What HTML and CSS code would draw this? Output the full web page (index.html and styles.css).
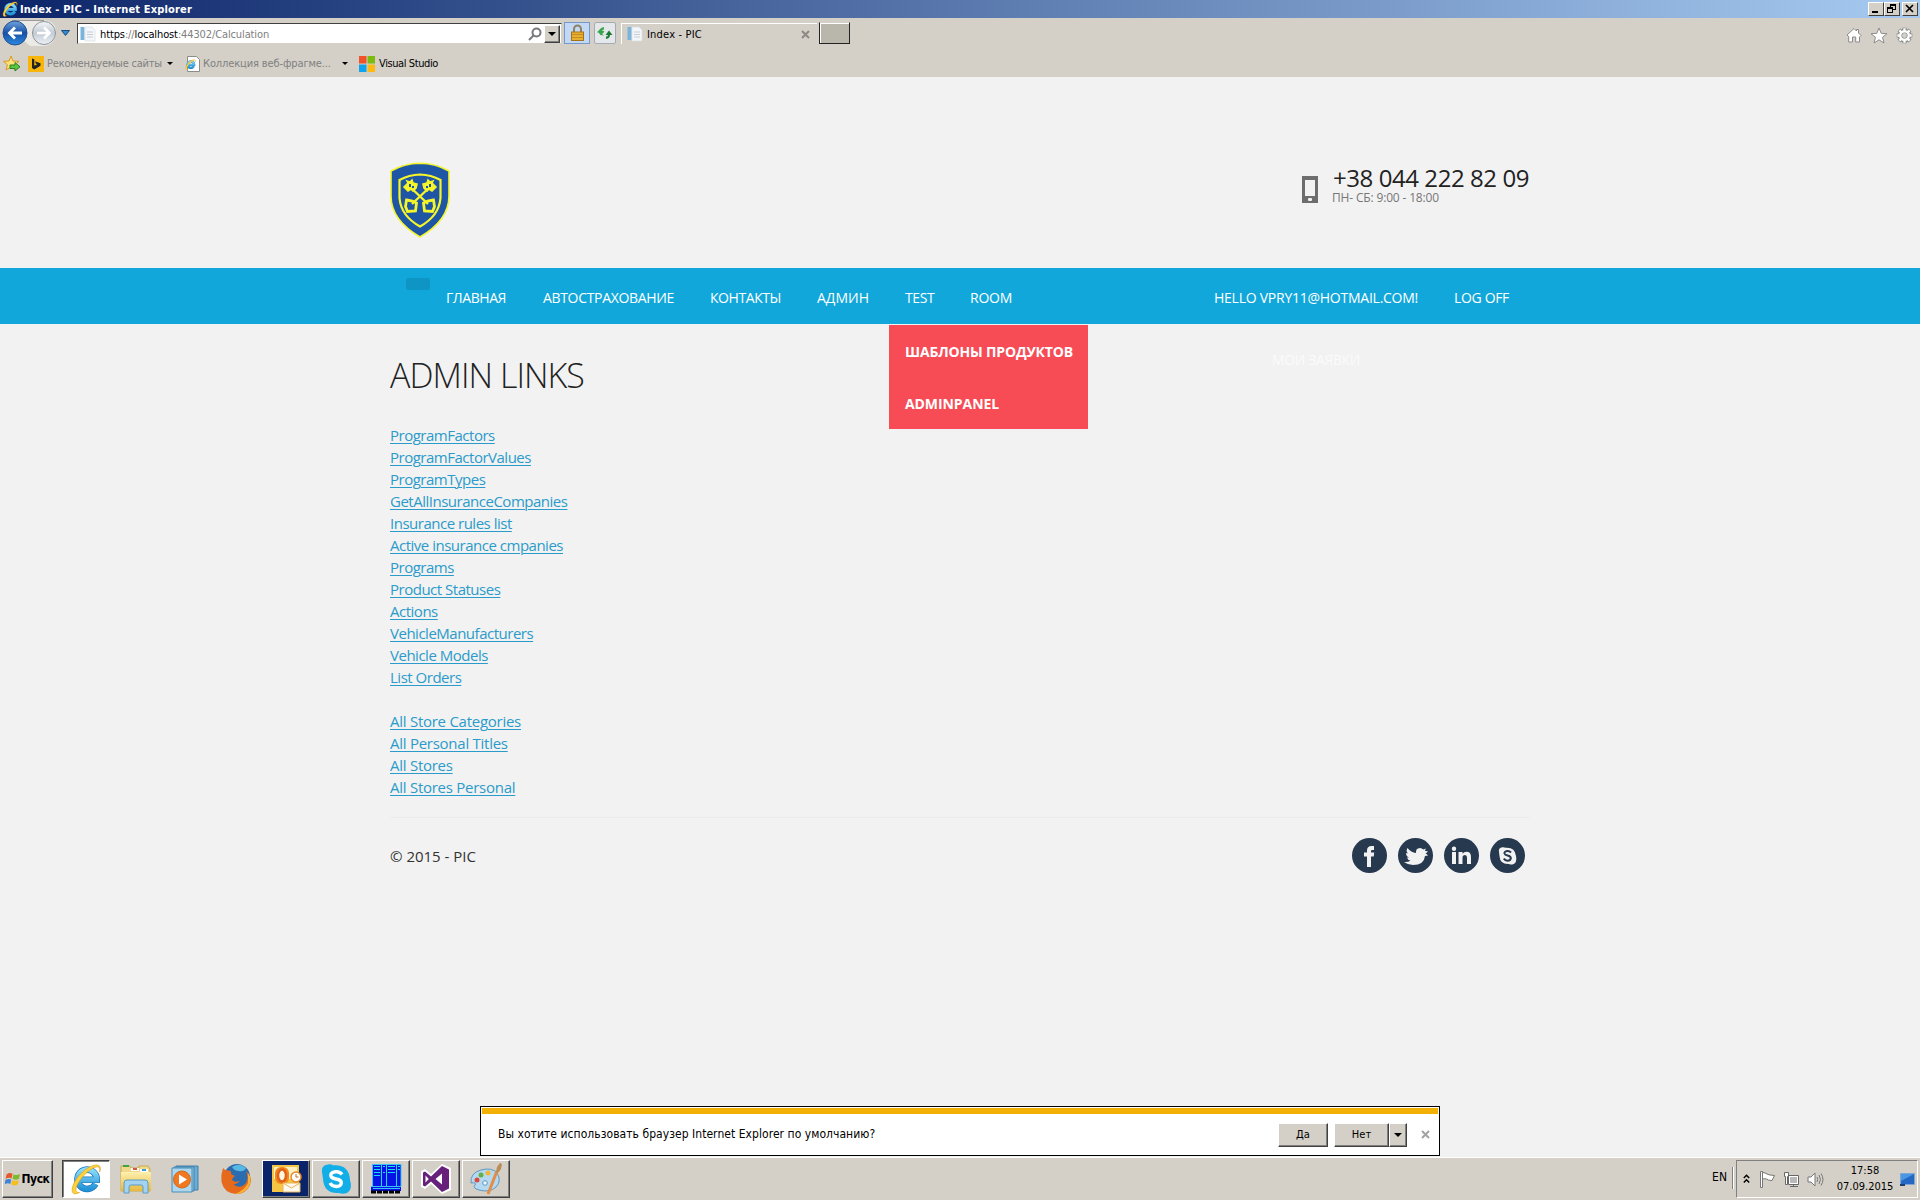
FILE: index.html
```html
<!DOCTYPE html>
<html lang="ru">
<head>
<meta charset="utf-8">
<title>Index - PIC</title>
<link rel="stylesheet" href="styles.css">
</head>
<body>
<svg class="defs" width="0" height="0">
  <defs>
    <linearGradient id="gBlue" x1="0" y1="0" x2="0" y2="1"><stop offset="0" stop-color="#6fa3dc"/><stop offset=".5" stop-color="#1750a8"/><stop offset="1" stop-color="#2c8ae0"/></linearGradient>
    <linearGradient id="gGrey" x1="0" y1="0" x2="0" y2="1"><stop offset="0" stop-color="#f5f7fa"/><stop offset=".5" stop-color="#c3cad3"/><stop offset="1" stop-color="#eef2f6"/></linearGradient>
    <linearGradient id="gIe" x1="0" y1="0" x2="0" y2="1"><stop offset="0" stop-color="#8bdcf8"/><stop offset="1" stop-color="#2394d8"/></linearGradient>
    <linearGradient id="gGold" x1="0" y1="0" x2="0" y2="1"><stop offset="0" stop-color="#fff0b0"/><stop offset="1" stop-color="#e6b93c"/></linearGradient>
    <symbol id="ie" viewBox="0 0 32 32">
      <path d="M25.500 21A9.600 9.600 0 1 1 26.700 16.800H9.500" fill="none" stroke="#1c74b8" stroke-width="6.600"/>
      <path d="M25.500 21A9.600 9.600 0 1 1 26.700 16.800H9.500" fill="none" stroke="url(#gIe)" stroke-width="5.200"/>
      <path d="M29.500 9C32 3.500 29 .5 23 2.500C13 6 4 17 2.300 25C1.300 31 4.500 32 9.500 29.500C5.500 29.800 5 27 7 22.500C10.500 15 18 7 25 4.300C29 2.800 30.500 5 29.500 9Z" fill="#ffd23c" stroke="#d99a12" stroke-width=".6"/>
    </symbol>
    <symbol id="page" viewBox="0 0 16 16">
      <rect x=".5" y="1" width="4" height="13" fill="#79b4dc"/><path d="M5 1h7l3 3v11H5z" fill="#f4f7f9" stroke="#d5dde3" stroke-width=".7"/><path d="M7 6h6M7 8.500h6M7 11h6" stroke="#c5ccd4" stroke-width="1"/>
    </symbol>
    <symbol id="winflag" viewBox="0 0 16 16">
      <path d="M1.500 3.500Q4.500 1 7.500 2.800L6.500 7.500Q3.500 6 .6 8z" fill="#e8572a"/><path d="M8.500 3.200Q11.500 5 15 3L14 7.800Q11 9.500 7.500 7.800z" fill="#7fba2c"/><path d="M.4 9Q3.500 7 6.300 8.600L5.300 13Q2.500 11.500-.5 13.500z" fill="#3b84d8"/><path d="M7.300 9Q10.500 10.800 13.800 9L12.800 13.500Q9.500 15.200 6.300 13.500z" fill="#f7bd1d"/>
    </symbol>
  </defs>
</svg>

<header class="titlebar">
  <svg width="16" height="16"><use href="#ie"/></svg>
  <span class="titlebar-text">Index - PIC - Internet Explorer</span>
  <div class="winbtns">
    <span class="winbtn"><svg width="15" height="13"><path d="M4 10h6" stroke="#000" stroke-width="2"/></svg></span>
    <span class="winbtn"><svg width="15" height="13" fill="none" stroke="#000"><path d="M6 2.500h6M6 3.500h6M6.500 2v3M11.500 2v6M9 7.500h3M3 5.500h6M3 6.500h6M3.500 5v6M8.500 5v6M3 10.500h6"/></svg></span>
    <span class="winbtn gap"><svg width="15" height="13"><path d="M4 3l7 7M11 3l-7 7" stroke="#000" stroke-width="1.700"/></svg></span>
  </div>
</header>

<div class="navrow">
  <svg class="backfwd" width="72" height="28" viewBox="0 0 72 28">
    <path d="M15 1H44Q57 3 56 14Q55 26 44 27H30Q20 20 15 1Z" fill="#eceae5"/><path d="M12 1.500H44" stroke="#9b9b9b"/>
    <circle cx="15" cy="14" r="12" fill="url(#gBlue)" stroke="#27508c"/><path d="M22 14H10M15 8.500L9.500 14L15 19.500" fill="none" stroke="#fff" stroke-width="2.800"/>
    <circle cx="44" cy="14" r="11.500" fill="url(#gGrey)" stroke="#8d949c"/><path d="M37 14h12M44 8.500l5.500 5.500l-5.500 5.500" fill="none" stroke="#fff" stroke-width="2.600"/>
    <path d="M61.500 11.500h8l-4 5z" fill="#2f8ad0" stroke="#164c80"/>
  </svg>
  <div class="address">
    <svg width="16" height="16"><use href="#page"/></svg>
    <span class="url"><b>https</b>://<b>localhost</b>:44302/Calculation</span>
    <svg class="mag" width="14" height="14" fill="none" stroke="#77777d" stroke-width="2"><circle cx="8.500" cy="5.500" r="4"/><path d="M5.500 8.500L1 13"/></svg>
    <span class="drop"><i class="caret"></i></span>
  </div>
  <span class="lockbox"><svg width="15" height="18"><path d="M4 8V5a3.500 3.500 0 0 1 7 0v3" fill="none" stroke="#8d8363" stroke-width="2"/><rect x="1.500" y="8" width="12" height="8.500" fill="#e9b030" stroke="#a3731a"/><path d="M2 10.500h11M2 13.500h11" stroke="#c48c20"/></svg></span>
  <span class="refresh"><svg width="16" height="14"><path d="M0 5.500L3.500 1.500L7 5.500H4.800Q5 7.500 7 8.500Q2.500 8.500 2.300 5.500z" transform="translate(0 1)" fill="#3aa74b"/><path d="M3 5Q3 1.500 7 1V3.500Q5 3.500 5 5H7.500L4 9.500L.5 5z" fill="#3aa74b"/><path d="M13 9Q13 12.500 9 13V10.500Q11 10.500 11 9H8.500L12 4.500L15.500 9z" fill="#1d7c30"/></svg></span>
  <div class="tab">
    <svg width="16" height="16"><use href="#page"/></svg>
    <span class="tabtitle">Index - PIC</span>
    <svg class="tabclose" width="9" height="9"><path d="M1 1l7 7M8 1l-7 7" stroke="#8c8984" stroke-width="2"/></svg>
  </div>
  <span class="newtab"></span>
  <div class="tools">
    <svg width="16" height="16" fill="#fff" stroke="#8b8b8b"><path d="M1 8L8 1.500L10.500 4V2.500h2V6L15 8.500L13.500 10V15H9.700V10H6.500v5H2.700V9.500z"/></svg>
    <svg width="18" height="17" fill="#fff" stroke="#8b8b8b"><path d="M9 1l2.200 5.300l5.800.4l-4.500 3.600l1.500 5.700l-5-3.200l-5 3.200l1.500-5.700L1 6.700l5.800-.4z"/></svg>
    <svg width="17" height="17" viewBox="-8.500 -8.500 17 17" fill="none"><g stroke="#858585" stroke-width="4.200"><path d="M0-7.800V-5M0 7.800V5M-7.800 0H-5M7.800 0H5M-5.500-5.500l2 2M5.500 5.500l-2-2M-5.500 5.500l2-2M5.500-5.500l-2 2"/></g><circle r="4.500" stroke="#858585" stroke-width="4.200"/><g stroke="#fff" stroke-width="2.400"><circle r="4.300"/><path d="M0-7.200V-5M0 7.200V5M-7.200 0H-5M7.200 0H5M-5.100-5.100l2 2M5.100 5.100l-2-2M-5.100 5.100l2-2M5.100-5.100l-2 2"/></g></svg>
  </div>
</div>

<div class="favbar">
  <svg class="fav-add" width="18" height="17"><path d="M8 1l2 5l6 .3l-4.300 3.500l1.300 5.200l-5-3l-5 3l1.500-5.200L.5 6.300L6 6z" fill="#ffe27a" stroke="#d8991f"/><path d="M7 10h5V7.500l5 4.300l-5 4.200v-2.500H7z" fill="#5cc540" stroke="#2b8420"/></svg>
  <svg class="bing" width="16" height="16"><path d="M0 0h16v16H0z" fill="#f8b50c"/><path d="M4 2.500l2.300.8v6.500l3-1.600l-1.500-.8L7 5.200l5.500 2v2.600L6.300 13.500L4 12z" fill="#222"/></svg>
  <span class="fav-rec">Рекомендуемые сайты</span><i class="caret sm"></i>
  <svg class="snip" width="16" height="16"><path d="M2.500.5h9l3 3v12h-12z" fill="#fff" stroke="#8c8c8c"/><svg x="0" y="3" width="11" height="11"><use href="#ie"/></svg></svg>
  <span class="fav-col">Коллекция веб-фрагме...</span><i class="caret sm far"></i>
  <svg class="ms" width="16" height="16"><path d="M0 0h7.500v7.500H0z" fill="#f0522a"/><path d="M8.500 0H16v7.500H8.500z" fill="#7cbb10"/><path d="M0 8.500h7.500V16H0z" fill="#10a3ee"/><path d="M8.500 8.500H16V16H8.500z" fill="#fdb914"/></svg>
  <span class="fav-vs">Visual Studio</span>
</div>

<main class="page">
  <section class="container top">
    <svg class="logo" width="60" height="76" viewBox="0 0 60 76">
      <path d="M30 1.200Q46 1.500 59 9V34Q59 58 30 75Q1 58 1 34V9Q14 1.500 30 1.200Z" fill="#1e56a5" stroke="#f5f52a" stroke-width="1.600"/>
      <path d="M30 12.500Q41 12.800 50.500 18V36Q49 54 30 64.500Q11 54 9.500 36V18Q19 12.800 30 12.500Z" fill="none" stroke="#f5f52a" stroke-width="2.200"/>
      <g fill="none" stroke="#f5f52a"><path d="M17 22L38 42M43 22L22 42" stroke-width="2.400"/><path d="M14 25l4-4l-1-2l3 1l2-2l1 3l4 1l-1 4l-3 3l-2-2l-3 2zM46 25l-4-4l1-2l-3 1l-2-2l-1 3l-4 1l1 4l3 3l2-2l3 2z" stroke-width="1.600" fill="#f5f52a"/><path d="M16.500 38l6 1l4 2l-1 8l-8 .5l-2-5zM43.500 38l-6 1l-4 2l1 8l8 .5l2-5z" stroke-width="2.800"/></g>
      <g fill="#1e56a5"><path d="M19 22h2v3h-2zM22 24h2v2h-2zM39 22h2v3h-2zM36 24h2v2h-2z"/></g>
    </svg>
    <div class="phone">
      <svg width="16" height="27"><path d="M0 0h16v27H0zM3 4v16h10V4z" fill="#6d6d6d" fill-rule="evenodd"/><rect x="6" y="22" width="4" height="3" rx="1" fill="#f2f2f2"/></svg>
      <div><div class="number">+38 044 222 82 09</div><div class="hours">ПН- СБ: 9:00 - 18:00</div></div>
    </div>
  </section>

  <nav class="menu">
    <div class="container menu-in">
      <span class="toggle"></span>
      <a class="home">ГЛАВНАЯ</a>
      <a class="auto">АВТОСТРАХОВАНИЕ</a>
      <a class="cont">КОНТАКТЫ</a>
      <a class="adm">АДМИН</a>
      <div class="has-sub">
        <a class="test">TEST</a>
        <div class="sub"><a class="tpl">ШАБЛОНЫ ПРОДУКТОВ</a><a>ADMINPANEL</a></div>
      </div>
      <a class="room">ROOM</a>
      <div class="has-sub user"><a class="hello">HELLO VPRY11@HOTMAIL.COM!</a><a class="orders">МОИ ЗАЯВКИ</a></div>
      <a class="logoff">LOG OFF</a>
    </div>
  </nav>

  <section class="container content">
    <h1>ADMIN LINKS</h1>
    <div class="links">
      <a>ProgramFactors</a><a>ProgramFactorValues</a><a>ProgramTypes</a><a>GetAllInsuranceCompanies</a><a>Insurance rules list</a><a>Active insurance cmpanies</a><a>Programs</a><a>Product Statuses</a><a>Actions</a><a>VehicleManufacturers</a><a>Vehicle Models</a><a>List Orders</a>
    </div>
    <div class="links stores">
      <a>All Store Categories</a><a>All Personal Titles</a><a>All Stores</a><a>All Stores Personal</a>
    </div>
    <footer>
      <span>© 2015 - PIC</span>
      <div class="social">
        <svg width="35" height="35"><circle cx="17.500" cy="17.500" r="17.500" fill="#27394f"/><path d="M15 29V18.500H12V14.500h3V12.500Q15 8 19.500 8H22v4h-2Q19 12 19 13.200V14.500h3.200l-.5 4H19V29z" fill="#f2f2f2"/></svg>
        <svg width="35" height="35"><circle cx="17.500" cy="17.500" r="17.500" fill="#27394f"/><path d="M6 24Q10 24.500 12.500 22.500Q9.500 22 9 19.500H11Q8 18 8 15l2 .6Q7.500 13 9.500 10Q13 14.500 18 15Q17.500 10.200 22 10Q24 10 25.200 11.500L28 10.500L26.800 12.800L30 13.500L27.500 15.800Q29 16 30 17.500L27 18Q26 27 15 27Q10 27 6 24Z" fill="#f2f2f2"/></svg>
        <svg width="35" height="35"><circle cx="17.500" cy="17.500" r="17.500" fill="#27394f"/><path d="M8 14h4v12H8zM14.500 14h4v1.800Q20 13.700 22.500 13.700Q27 13.700 27 19v7h-4v-6.500Q23 17 21 17Q18.500 17 18.500 19.800V26h-4z" fill="#f2f2f2"/><circle cx="10" cy="10.800" r="2.200" fill="#f2f2f2"/></svg>
        <svg width="35" height="35"><circle cx="17.500" cy="17.500" r="17.500" fill="#27394f"/><path d="M9 14Q8 10 12.500 9.200Q14.500 9 15.500 9.800Q25 9 26 18Q27.500 25 22.500 26.500Q20.500 26.800 19 26Q10 26.500 9.500 18Z" fill="#f2f2f2"/><path d="M21 14.500Q19.500 12.800 17.200 13Q14 13.500 14.500 15.500Q15 17 17.500 17.500Q21 18.200 20.800 20.500Q20.200 22.800 17.500 22.700Q15 22.500 13.800 20.500" fill="none" stroke="#27394f" stroke-width="2"/></svg>
      </div>
    </footer>
  </section>

  <aside class="notice">
    <span class="question">Вы хотите использовать браузер Internet Explorer по умолчанию?</span>
    <button class="btn yes">Да</button>
    <button class="btn no">Нет</button><button class="btn arrow"><i class="caret"></i></button>
    <svg class="dismiss" width="9" height="9"><path d="M1 1l7 7M8 1l-7 7" stroke="#a3a3a3" stroke-width="2"/></svg>
  </aside>
</main>

<div class="taskbar">
  <div class="start"><svg width="16" height="16"><use href="#winflag"/></svg>Пуск</div>
  <div class="task active"><svg width="32" height="32"><use href="#ie"/></svg></div>
  <div class="task flat"><svg width="32" height="32"><path d="M1 3h9l1 2h8v-2h9l2 3v22H1z" fill="#f0d98a" stroke="#caa84c"/><path d="M3 2h6v2H3z" fill="#3ba54a"/><path d="M11 5h8v3h-8z" fill="#fff"/><path d="M13 5h4v2h-4z" fill="#d45b3a"/><path d="M20 6h8v3h-8z" fill="#fff"/><path d="M22 6h4v2h-4z" fill="#3f9ad0"/><path d="M1 9h30v19H1z" fill="url(#gGold)"/><path d="M4 30V20q0-3 3-3h18q3 0 3 3v10h-5v-6q0-2-2-2H11q-2 0-2 2v6z" fill="#a3d3ee" stroke="#5b9cc6"/></svg></div>
  <div class="task flat"><svg width="32" height="32"><path d="M6 3h22v24H6z" fill="#6aaed4" stroke="#3e7ea8"/><path d="M4 4h20v24H4z" fill="#8ec5e3" stroke="#3e7ea8"/><path d="M2 5h20v24H2z" fill="#acd7ee" stroke="#4b8db6"/><circle cx="12" cy="16.500" r="8.500" fill="#f07820" stroke="#d2691d"/><path d="M9 11.500l8 5l-8 5z" fill="#fff"/></svg></div>
  <div class="task flat"><svg width="32" height="32"><circle cx="17" cy="14" r="13" fill="#2a6cae"/><path d="M12 4Q20-1 26 5Q24 9 19 8Q14 8 12 4z" fill="#58b8e4"/><path d="M3 5Q5 8 9 7.500Q12 8 11 11L15 13Q12 15 12 17Q15 20 20 18Q17 22 13 21Q20 27 26 20Q29 15 26 8Q33 14 30 22Q26 31 16 31Q4 30 1.500 19Q.5 12 3 5z" fill="#e66a1c"/><path d="M28 10Q33 17 28 25Q23 31 15 31Q25 27 28 20z" fill="#f9b233"/></svg></div>
  <div class="task navy"><svg width="34" height="34"><path d="M3 3h27v27H3z" fill="#f7c544"/><path d="M5 5h23v12H5z" fill="#fff1c2"/><rect x="6" y="5" width="14" height="17" rx="6" fill="#f08a1d"/><ellipse cx="13" cy="13.500" rx="4" ry="6" fill="#fff6df" stroke="#e2601a" stroke-width="2.500"/><path d="M14 21h17v9H14z" fill="#fffaf0" stroke="#e9b45b"/><path d="M14 21l8.500 5l8.500-5" fill="none" stroke="#e9b45b"/><circle cx="27" cy="15" r="5" fill="#fff" stroke="#e78826" stroke-width="1.500"/><path d="M27 12v3h2.500" fill="none" stroke="#c46d1d"/></svg></div>
  <div class="task"><svg width="32" height="32"><path d="M2 9Q1 2 8 1.500Q11 1 13 2.300Q29 1 30 17Q33 26 27 30Q23 31.500 19 30Q4 31 3 16Z" fill="#12aee8"/><path d="M22 11.500Q20 8.500 16 8.700Q10.500 9 10.800 12.500Q11 15 16 16Q21.500 17 21.300 20Q21 23.500 16.500 23.500Q12 23.500 10 20" fill="none" stroke="#fff" stroke-width="3.400"/></svg></div>
  <div class="task"><svg width="32" height="32"><path d="M2 1h29v22H2zM1 23h30v5H1z" fill="#0713e6"/><path d="M11.500 1v22M16.500 1v22M26.500 1v22" stroke="#16dff0"/><path d="M4 3.500h6M4 6.500h6M4 9.500h6M4 12.500h6M13 3.500h2M18 3.500h7M18 6.500h7M18 9.500h7M13 9.500h2M28 3.500h2M28 6.500h2" stroke="#16dff0"/><path d="M2 1.500h29M2.500 1v22M31 1v22M1 23.500h30M3 25.500h27" stroke="#34c5f0"/><path d="M1 29h30" stroke="#000" stroke-width="3" stroke-dasharray="5 1"/></svg></div>
  <div class="task"><svg width="32" height="32"><path d="M22 1l9 4v22l-9 4l-11-10l-6 5l-4-2V8l4-2l6 5z" fill="#fff"/><path d="M22 3l7 3.500v19L22 29L11 18.500L5 23.500l-2-1v-13l2-1l6 5zM22 10.500L15.500 16L22 21.500zM5.500 12.500v7L8.800 16z" fill="#68217a" fill-rule="evenodd"/></svg></div>
  <div class="task"><svg width="32" height="32"><path d="M1 20Q0 10 11 7Q22 4 27 10Q32 18 26 24Q20 30 9 27Q2 25 5 22Q7 19 1 20z" fill="#b5d9f0" stroke="#5e98c0"/><circle cx="7" cy="17" r="2.500" fill="#d84b3a"/><circle cx="11" cy="12" r="2.500" fill="#62b146"/><circle cx="18" cy="10" r="2.500" fill="#f2b63a"/><circle cx="15" cy="20" r="2.300" fill="#edf6fb" stroke="#5e98c0"/><path d="M27 8L18 31" stroke="#e58d46" stroke-width="3"/><path d="M26 9l1-5l3-4l2 1l-1 5l-3 4z" fill="#b98c58"/></svg></div>
  <span class="lang">EN</span><i class="sep"></i>
  <div class="tray">
    <svg class="chev" width="7" height="10" fill="none" stroke="#000" stroke-width="1.500"><path d="M.8 4L3.500 1.300L6.200 4M.8 8.500L3.500 5.800L6.200 8.500"/></svg>
    <svg class="flag" width="17" height="17" fill="#fff" stroke="#777"><path d="M3.500 1.500Q6 1.500 8 3Q9 4 15.500 4.500L13 9.500Q9 9.500 7.500 8Q6 7.500 3.500 8"/><path d="M1.500.5h2v16h-2z"/></svg>
    <svg class="net" width="17" height="17" fill="#fff" stroke="#666"><path d="M5.500 4.500h10v9h-10z"/><path d="M7 6h7v6H7z" fill="#b9b9b9" stroke="none"/><path d="M7 15.500h8M10.500 13.500v2"/><path d="M1.500 1.500h4v4h-1v8h-2v-8h-1z"/></svg>
    <svg class="vol" width="17" height="17" fill="#fff" stroke="#777"><path d="M1 6h3l4-4v13l-4-4H1z"/><path d="M10 6q1.500 2.500 0 5M12 4q3 4.500 0 9M14 2.500q4 6 0 12" fill="none"/></svg>
    <div class="clock"><span>17:58</span><span>07.09.2015</span></div>
    <svg class="desk" width="15" height="13"><path d="M.5.5h14v11H.5z" fill="#2468c4" stroke="#7fa5d3"/><path d="M1 1h13L1 8z" fill="#4b97e6"/><path d="M0 11h5v2H0z" fill="#1b3f74"/></svg>
  </div>
</div>
</body>
</html>
```
FILE: styles.css
```css
* { box-sizing: border-box; }
html, body { height: 100%; }
body {
  margin: 0;
  display: flex;
  flex-direction: column;
  overflow: hidden;
  background: #f2f2f2;
  color: #000;
  font: 11px "DejaVu Sans Condensed", "DejaVu Sans", sans-serif;
  font-stretch: condensed;
  white-space: nowrap;
}
svg { display: block; flex: none; overflow: visible; }
svg.defs { position: absolute; }

/* browser window */
.titlebar {
  flex: none;
  height: 18px;
  display: flex;
  align-items: center;
  padding: 0 2px 0 2px;
  background: linear-gradient(90deg, #0c2569, #a6caf0);
  color: #fff;
}
.titlebar-text { margin-left: 2px; font-weight: bold; letter-spacing: .16px; }
.winbtns { margin-left: auto; display: flex; }
.winbtn {
  width: 16px;
  height: 14px;
  background: #d4d0c8;
  border: 1px solid;
  border-color: #fff #404040 #404040 #fff;
}
.winbtn svg { margin: -1px 0 0 -1px; }
.winbtn.gap { margin-left: 2px; }

.navrow {
  flex: none;
  height: 30px;
  display: flex;
  align-items: center;
  background: #d4d0c8;
}
.backfwd { margin-left: 0; }
.address {
  width: 485px;
  height: 21px;
  margin: 0 0 0 5px;
  display: flex;
  align-items: center;
  padding: 1px 1px 0 2px;
  background: #fff;
  border: 1px solid;
  border-color: #404040 #d4d0c8 #d4d0c8 #404040;
}
.url { margin: 1px 0 0 4px; color: #808080; letter-spacing: -.12px; }
.url b { font-weight: normal; color: #000; }
.mag { margin-left: auto; margin-right: 2px; }
.drop, .btn {
  background: #d4d0c8;
  border: 1px solid;
  border-color: #fff #404040 #404040 #fff;
  box-shadow: inset -1px -1px #808080;
}
.drop { width: 16px; height: 18px; display: flex; align-items: center; justify-content: center; }
.caret {
  width: 0;
  height: 0;
  border: 4px solid transparent;
  border-top-color: #000;
  border-bottom: 0;
}
.caret.sm { border-width: 3px; border-bottom: 0; margin-left: 5px; }
.caret.sm.far { margin-left: 11px; }
.lockbox, .refresh { display: flex; align-items: center; justify-content: center; height: 22px; border: 1px solid; }
.lockbox { width: 26px; margin-left: 2px; background: #c2d8f5; border-color: #7598c8; }
.refresh { width: 22px; margin-left: 4px; background: #e5e8ea; border-color: #a5abb5; border-radius: 2px; }
.tab {
  width: 196px;
  height: 21px;
  margin-left: 5px;
  padding: 1px 7px 0 5px;
  display: flex;
  align-items: center;
  border: solid #fff;
  border-width: 1px 0 0 1px;
}
.tabtitle { margin-left: 4px; letter-spacing: .19px; }
.tabclose { margin-left: auto; }
.newtab {
  width: 31px;
  height: 22px;
  margin-left: 2px;
  background: #b9b6ab;
  border: 1px solid #222;
  border-top-color: #d4d0c8;
  box-shadow: inset 1px 1px #fff;
}
.tools { margin: 4px 7px 0 auto; display: flex; gap: 8px; align-items: center; }

.favbar {
  flex: none;
  height: 29px;
  display: flex;
  align-items: center;
  padding: 2px 0 0 3px;
  background: #d4d0c8;
}
.bing { margin-left: 7px; }
.fav-rec { width: 115px; margin-left: 3px; color: #808080; letter-spacing: -.21px; }
.snip { margin-left: 12px; }
.fav-col { width: 128px; margin-left: 2px; color: #808080; letter-spacing: -.12px; }
.ms { margin-left: 11px; }
.fav-vs { margin-left: 4px; letter-spacing: -.4px; }

/* site */
.page {
  flex: 1;
  display: flex;
  flex-direction: column;
  position: relative;
  background: #f2f2f2;
  font-family: "Open Sans", "Noto Sans", sans-serif;
  font-stretch: normal;
}
.container { width: 1140px; margin: 0 auto; }
.top {
  height: 191px;
  display: flex;
  justify-content: space-between;
  align-items: flex-start;
  padding-top: 85px;
}
.phone { display: flex; gap: 14px; margin-top: 2px; }
.phone svg { margin-top: 12px; }
.number { width: 198px; font-size: 24px; line-height: 28px; letter-spacing: -.43px; color: #222; padding-left: 1px; }
.hours { font-size: 12px; line-height: 12px; letter-spacing: -.16px; color: #777; }

.menu { height: 56px; background: #12a7da; color: #fff; font-size: 14px; line-height: 20px; }
.menu-in { height: 56px; display: flex; align-items: center; padding-top: 4px; }
.toggle {
  align-self: flex-start;
  width: 24px;
  height: 12px;
  margin: 6px 0 0 16px;
  border-radius: 3px;
  background: #0e95c3;
}
.home { width: 60px; margin-left: 16px; letter-spacing: -.44px; }
.auto { width: 131px; margin-left: 37px; letter-spacing: -.33px; }
.cont { width: 71px; margin-left: 36px; letter-spacing: -.43px; }
.adm { width: 52px; margin-left: 36px; }
.has-sub { position: relative; margin-left: 36px; }
.test { letter-spacing: -.4px; }
.has-sub:not(.user) { width: 29px; }
.room { width: 42px; margin-left: 36px; letter-spacing: -.25px; }
.user { width: 204px; margin-left: auto; }
.hello { letter-spacing: -.25px; }
.logoff { width: 55px; margin: 0 21px 0 36px; letter-spacing: -.34px; }
.sub {
  position: absolute;
  left: -16px;
  top: 37px;
  width: 199px;
  height: 104px;
  padding: 1px 0 0 16px;
  background: #f74b55;
  font-weight: bold;
  line-height: 52px;
}
.sub a { display: block; letter-spacing: -.08px; }
.sub .tpl { letter-spacing: -.16px; }
.orders { position: absolute; left: 58px; top: 62px; letter-spacing: -.38px; color: #fbfbfb; }

h1 {
  margin: 0;
  padding-top: 31px;
  height: 100px;
  font-size: 34px;
  line-height: 40px;
  font-weight: 300;
  letter-spacing: -.96px;
  color: #222;
}
.links { display: flex; flex-direction: column; align-items: flex-start; font-size: 15px; line-height: 22px; letter-spacing: -.49px; }
.links a { color: #2a9bcb; text-decoration: underline 1px; text-underline-offset: 2px; }
.stores { margin-top: 22px; letter-spacing: -.26px; }
footer {
  display: flex;
  align-items: center;
  justify-content: space-between;
  height: 76px;
  margin-top: 19px;
  padding-right: 5px;
  border-top: 1px solid #ececec;
  font-size: 15px;
  color: #333;
}
.social { display: flex; gap: 11px; }

.notice {
  position: absolute;
  left: 480px;
  bottom: 1px;
  width: 960px;
  height: 50px;
  display: flex;
  align-items: center;
  padding: 7px 9px 0 17px;
  background: #fff;
  border: 1px solid #000;
  font: 12px "DejaVu Sans Condensed", "DejaVu Sans", sans-serif;
  font-stretch: condensed;
}
.notice::before { content: ""; position: absolute; left: 1px; right: 1px; top: 1px; height: 6px; background: #f2b005; }
.question { letter-spacing: .05px; margin-top: -1px; }
.btn { height: 24px; padding: 0; font: inherit; font-size: 11px; color: #000; }
.yes { width: 50px; margin-left: auto; }
.no { width: 55px; margin-left: 6px; }
.arrow { width: 18px; display: flex; align-items: center; justify-content: center; }
.dismiss { margin-left: 14px; }

/* taskbar */
.taskbar {
  flex: none;
  height: 43px;
  display: flex;
  align-items: flex-start;
  padding: 2px 2px 0;
  background: #d4d0c8;
  border-top: 1px solid #fff;
}
.start, .task {
  height: 38px;
  display: flex;
  align-items: center;
  justify-content: center;
  border: 1px solid;
  border-color: #fff #404040 #404040 #fff;
  box-shadow: inset -1px -1px #808080;
}
.start { width: 51px; margin-right: 9px; font-weight: bold; font-size: 12px; letter-spacing: -.45px; }
.task { width: 48px; margin-right: 2px; }
.task.active { background: #fff; border-color: #404040 #fff #fff #404040; box-shadow: inset 1px 1px #808080; }
.task.flat { border-color: transparent; box-shadow: none; }
.task.navy { background: #0a246a; }
.lang { margin: 10px 0 0 auto; font-size: 12px; }
.sep { width: 1px; height: 22px; margin: 7px 3px 0 5px; background: #808080; box-shadow: 1px 0 #fff; }
.tray {
  width: 182px;
  height: 38px;
  display: flex;
  align-items: center;
  padding-left: 6px;
  border: 1px solid;
  border-color: #808080 #fff #fff #808080;
}
.flag { margin-left: 9px; }
.net { margin-left: 7px; }
.vol { margin-left: 7px; }
.clock { display: flex; flex-direction: column; align-items: center; width: 58px; margin-left: 12px; line-height: 16px; }
.desk { margin-left: 6px; }
```
